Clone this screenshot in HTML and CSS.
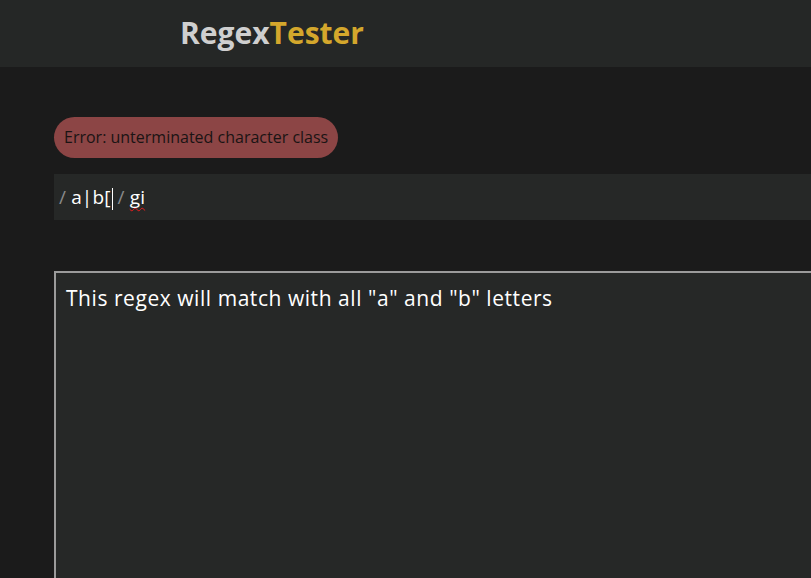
FILE: index.html
```html
<!DOCTYPE html>
<html>
<head>
<meta charset="utf-8">
<link rel="stylesheet" href="styles.css">
</head>
<body>
<header class="topbar">
  <h1 class="logo"><span class="logo-a">Regex</span><span class="logo-b">Tester</span></h1>
</header>
<main class="main">
  <div class="error">Error: unterminated character class</div>
  <div class="regex-row">
    <span class="slash">/</span>
    <span class="pattern">a|b[<span class="caret"></span></span>
    <span class="slash">/</span>
    <span class="flags">gi</span>
  </div>
  <div class="text-box">This regex will match with all "a" and "b" letters</div>
</main>
</body>
</html>
```
FILE: styles.css
```css
html, body {
  margin: 0;
  padding: 0;
  background: #1b1b1b;
  overflow: hidden;
  width: 811px;
  height: 578px;
  font-family: "Open Sans", "Noto Sans", sans-serif;
}
.topbar {
  height: 67px;
  box-sizing: border-box;
  background: #252726;
  display: flex;
  align-items: center;
  padding-left: 180px;
  padding-bottom: 2px;
}
.logo {
  margin: 0;
  font-size: 30px;
  font-weight: 700;
  line-height: 1;
}
.logo-a { color: #cfcfcf; }
.logo-b { color: #d4a72c; }
.main {
  padding: 50px 0 0 54px;
  width: 1000px;
}
.error {
  display: inline-block;
  background: #8c4545;
  color: #1a1414;
  font-size: 16px;
  height: 41px;
  line-height: 41px;
  padding: 0 10px;
  border-radius: 21px;
  box-sizing: border-box;
}
.regex-row {
  margin-top: 16px;
  height: 46px;
  background: #262827;
  display: flex;
  align-items: center;
  padding-left: 5px;
  font-size: 19px;
  color: #ffffff;
  gap: 5px;
  letter-spacing: 0.15px;
}
.slash { color: #8a8a8a; }
.pattern { position: relative; }
.caret {
  display: inline-block;
  width: 1px;
  height: 22px;
  margin-left: 1px;
  background: #ffffff;
  vertical-align: middle;
}
.flags {
  text-decoration: underline wavy #e81c1c;
  text-decoration-skip-ink: none;
  text-underline-offset: 3px;
  text-decoration-thickness: 1px;
}
.text-box {
  margin-top: 51px;
  height: 400px;
  border: 2px solid #9b9b9b;
  background: #262827;
  color: #ffffff;
  font-size: 21px;
  padding: 11px 10px;
  letter-spacing: 0.55px;
}
```
